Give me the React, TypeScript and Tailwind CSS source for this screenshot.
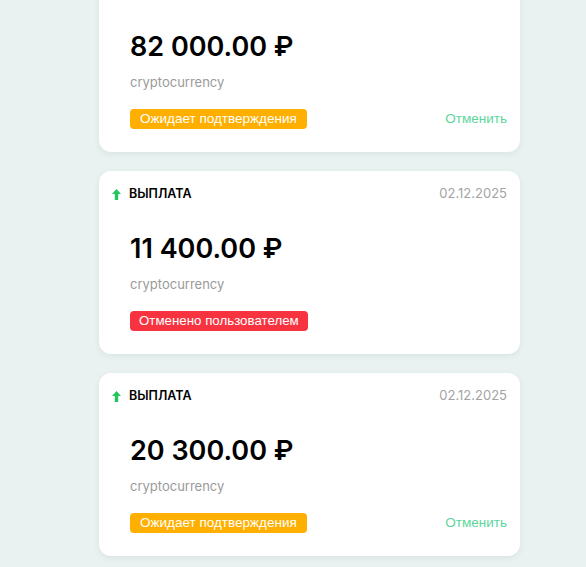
import React from 'react'

type Status = 'pending' | 'cancelled'

interface Payout {
  id: number
  amount: string
  date: string
  method: string
  status: Status
}

const payouts: Payout[] = [
  { id: 1, amount: '82 000.00 ₽', date: '02.12.2025', method: 'cryptocurrency', status: 'pending' },
  { id: 2, amount: '11 400.00 ₽', date: '02.12.2025', method: 'cryptocurrency', status: 'cancelled' },
  { id: 3, amount: '20 300.00 ₽', date: '02.12.2025', method: 'cryptocurrency', status: 'pending' },
]

function ArrowUp() {
  return (
    <svg width="9" height="11" viewBox="0 0 9 11" className="shrink-0">
      <path d="M4.5 0 L9 5 L6.2 5 L6.2 11 L2.8 11 L2.8 5 L0 5 Z" fill="#22c55e" />
    </svg>
  )
}

function PayoutCard({ p }: { p: Payout }) {
  return (
    <div className="bg-white rounded-[12px] shadow-[0_2px_6px_rgba(40,70,60,0.08)] pt-[16px] px-[13px] pb-[23px]">
      <div className="flex items-center justify-between h-[14px]">
        <div className="flex items-center gap-[8px]">
          <ArrowUp />
          <span className="text-[12.5px] font-semibold text-black">ВЫПЛАТА</span>
        </div>
        <span className="text-[13px] text-[#a3a3a3]">{p.date}</span>
      </div>
      <div className="pl-[18px]">
        <div className="mt-[32px] text-[27px] leading-[32px] font-semibold text-black">{p.amount}</div>
        <div className="mt-[10px] text-[13px] leading-[18px] text-[#9a9a9a]">{p.method}</div>
        <div className="mt-[18px] flex items-center justify-between h-[20px]">
          {p.status === 'pending' ? (
            <span className="h-[20px] flex items-center px-[10px] rounded-[4px] bg-[#ffaf00] text-white text-[13.5px] font-['Liberation_Sans',Arial,sans-serif]">
              Ожидает подтверждения
            </span>
          ) : (
            <span className="h-[20px] flex items-center px-[9px] rounded-[4px] bg-[#f7333f] text-white text-[13.3px] font-['Liberation_Sans',Arial,sans-serif]">
              Отменено пользователем
            </span>
          )}
          {p.status === 'pending' && (
            <button className="text-[13.5px] text-[#5cd69c] font-['Liberation_Sans',Arial,sans-serif]">Отменить</button>
          )}
        </div>
      </div>
    </div>
  )
}

export default function App() {
  return (
    <div className="h-[567px] overflow-hidden bg-[#e9f2f0] font-['Inter',sans-serif]">
      <div className="-mt-[31px] ml-[99px] w-[421px] flex flex-col gap-[19px]">
        {payouts.map(p => (
          <PayoutCard key={p.id} p={p} />
        ))}
      </div>
    </div>
  )
}
